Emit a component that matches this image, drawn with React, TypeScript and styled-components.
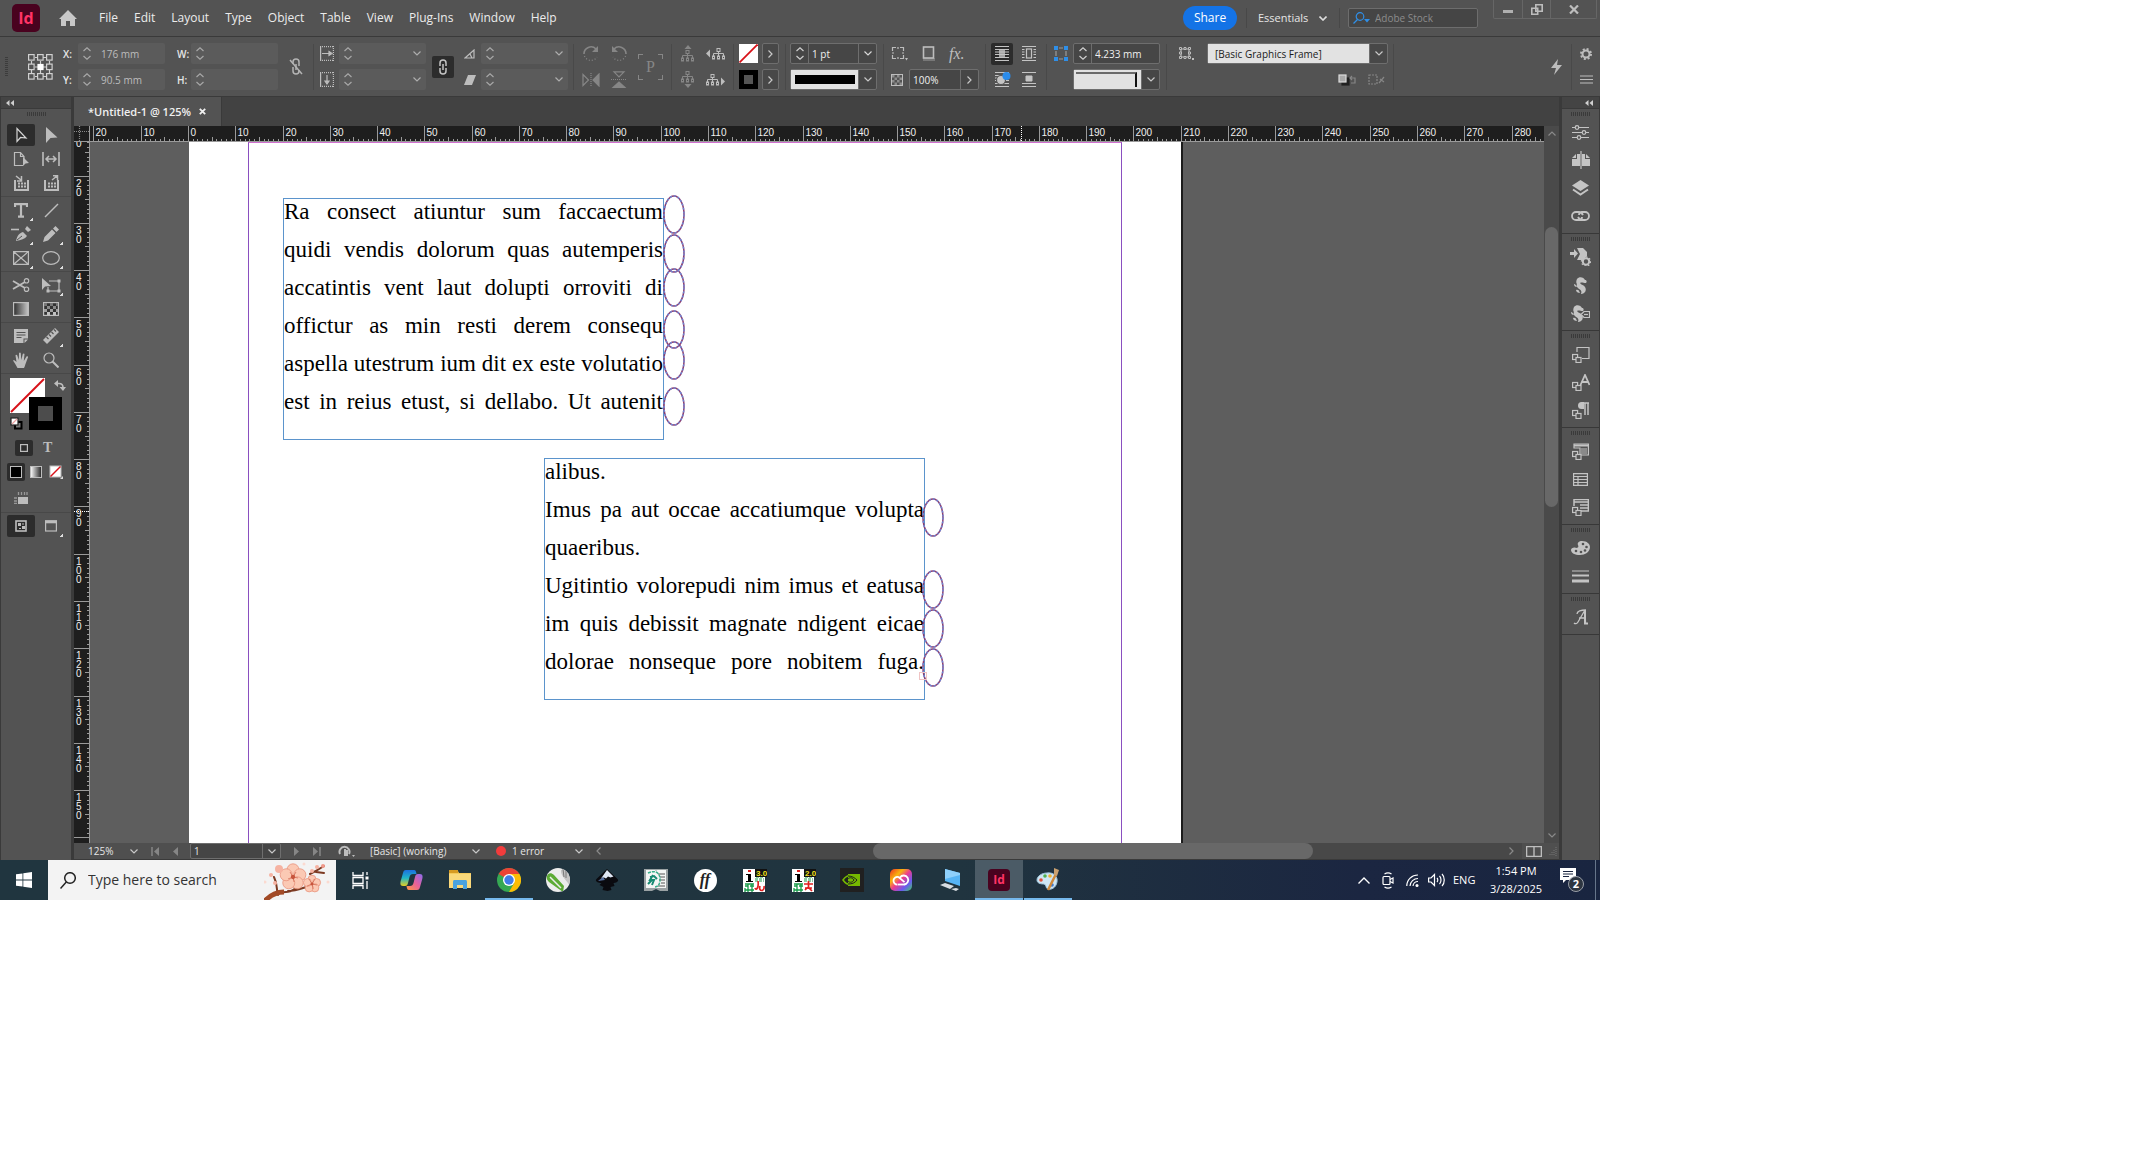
import React from "react";
import styled, { createGlobalStyle, css } from "styled-components";

const ui = '"Open Sans", "Noto Sans", sans-serif';
const c = {
  chrome: "#535353",
  dark: "#424242",
  line: "#3a3a3a",
  pressed: "#2c2c2c",
  icon: "#bdbdbd",
  dim: "#868686",
  text: "#e6e6e6",
  canvas: "#5e5e5e",
  ruler: "#1e1e1e",
};

const Global = createGlobalStyle`
  *, *::before, *::after { box-sizing: border-box; }
  body { margin: 0; background: #fff; font-family: ${ui}; }
  button, input, select { font: inherit; color: inherit; margin: 0; padding: 0; border: 0; background: none; border-radius: 0; }
  svg { display: block; flex: none; }
`;

const Desktop = styled.div`
  display: flex;
  flex-direction: column;
  width: 100%;
  max-width: 1600px;
  aspect-ratio: 16 / 9;
  overflow: hidden;
  background: ${c.chrome};
  color: ${c.text};
  font-size: 10px;
  line-height: 14px;
`;

/* ---------- shared icon wrapper ---------- */
type IcoProps = { w: number; h?: number; color?: string; children: React.ReactNode };
const Ico = ({ w, h = w, color = c.icon, children }: IcoProps) => (
  <svg width={w} height={h} viewBox={`0 0 ${w} ${h}`} fill="none" stroke={color} strokeWidth="1.2" aria-hidden="true">
    {children}
  </svg>
);
const Chevron = ({ color = "#c8c8c8" }: { color?: string }) => (
  <Ico w={8} h={5} color={color}><path d="M.5.5 4 4 7.5.5" /></Ico>
);
const ChevronRight = ({ color = "#c8c8c8" }: { color?: string }) => (
  <Ico w={5} h={8} color={color}><path d="M.5.5 4 4 .5 7.5" /></Ico>
);

/* ---------- menu bar ---------- */
const MenuBar = styled.header`
  display: flex;
  align-items: center;
  height: 37px;
  flex: none;
  padding-left: 12px;
  border-bottom: 1px solid ${c.line};
`;
const Logo = styled.span<{ $size: number }>`
  display: grid;
  place-items: center;
  width: ${(p) => p.$size}px;
  height: ${(p) => p.$size}px;
  border-radius: ${(p) => (p.$size > 24 ? 5 : 4)}px;
  background: #49021f;
  color: #ff3366;
  font-weight: 700;
  font-size: ${(p) => (p.$size > 24 ? 16 : 12)}px;
  line-height: 20px;
`;
const HomeButton = styled.button`
  margin: 0 22px 0 19px;
`;
const Menu = styled.nav`
  display: flex;
  gap: 16px;
  font-size: 12px;
  line-height: 16px;
  color: #ececec;
`;
const MenuTools = styled.div`
  display: flex;
  align-items: center;
  align-self: stretch;
  margin-left: auto;
`;
const ShareButton = styled.button`
  width: 54px;
  height: 24px;
  border-radius: 12px;
  background: #1473e6;
  color: #fff;
  font-size: 12px;
`;
const Rule = styled.i<{ $before: number; $after: number }>`
  flex: none;
  width: 1px;
  height: 20px;
  margin: 0 ${(p) => p.$after}px 0 ${(p) => p.$before}px;
  background: #484848;
`;
const Picker = styled.label<{ $w: number }>`
  display: flex;
  align-items: center;
  width: ${(p) => p.$w}px;
  select {
    appearance: none;
    flex: 1;
    min-width: 0;
    outline: 0;
  }
`;
const Workspace = styled(Picker)`
  font-size: 11px;
`;
const StockSearch = styled.label`
  display: flex;
  align-items: center;
  gap: 5px;
  width: 130px;
  height: 20px;
  padding-left: 4px;
  border: 1px solid #6d6d6d;
  border-radius: 2px;
  background: #454545;
  input { width: 96px; font-size: 10px; outline: 0; }
  input::placeholder { color: #8c8c8c; opacity: 1; }
`;
const WindowButtons = styled.div`
  display: flex;
  align-self: flex-start;
  height: 19px;
  margin: 0 3px 0 15px;
  border: 1px solid #666;
  border-top: 0;
  border-radius: 0 0 2px 2px;
  button { display: grid; place-items: center; width: 28px; }
  button + button { border-left: 1px solid #666; }
  button:last-child { width: 46px; }
`;

/* ---------- control bar ---------- */
const ControlBar = styled.section`
  display: flex;
  align-items: center;
  flex: none;
  height: 60px;
  border-bottom: 1px solid ${c.line};
`;
const Stack = styled.div<{ $gap: number; $w: number }>`
  flex: none;
  display: grid;
  grid-template-rows: 21px 21px;
  row-gap: 5px;
  align-items: center;
  width: ${(p) => p.$w}px;
  margin-left: ${(p) => p.$gap}px;
`;
const Whole = styled.div<{ $gap: number; $w: number }>`
  flex: none;
  width: ${(p) => p.$w}px;
  margin-left: ${(p) => p.$gap}px;
`;
const Divider = styled.i<{ $gap: number }>`
  flex: none;
  width: 1px;
  height: 46px;
  margin-left: ${(p) => p.$gap}px;
  background: #494949;
`;
const FieldLabel = styled.label`
  font-size: 10px;
  font-weight: 600;
`;
const FieldBox = styled.div<{ $on?: boolean }>`
  display: flex;
  height: 21px;
  border-radius: 2px;
  background: #5b5b5b;
  color: #bdbdbd;
  ${(p) => p.$on && css`
    background: #464646;
    color: #f0f0f0;
    border: 1px solid #6e6e6e;
  `}
  input {
    flex: 1;
    width: 0;
    min-width: 0;
    padding-left: ${(p) => (p.$on ? 3 : 5)}px;
    font-size: 10px;
    outline: 0;
  }
`;
const Cell = styled.span<{ $on?: boolean; $left?: boolean }>`
  display: grid;
  place-items: center;
  align-content: center;
  gap: 4px;
  width: 18px;
  flex: none;
  ${(p) => p.$on && (p.$left ? "border-right: 1px solid #6e6e6e;" : "border-left: 1px solid #6e6e6e;")}
`;
const Spin = ({ on }: { on?: boolean }) => (
  <Cell $on={on} $left>
    <Ico w={8} h={13} color={on ? "#d0d0d0" : "#a8a8a8"}><path d="M.5 4 4 .8 7.500 4M.5 9 4 12.200 7.500 9" /></Ico>
  </Cell>
);
type FieldProps = { name: string; value?: string; id?: string; spin?: boolean; drop?: boolean; right?: boolean; on?: boolean };
const Field = ({ name, value = "", id, spin = true, drop, right, on }: FieldProps) => (
  <FieldBox $on={on}>
    {spin && <Spin on={on} />}
    <input id={id} aria-label={id ? undefined : name} defaultValue={value} />
    {drop && <Cell $on={on}><Chevron color={on ? "#d8d8d8" : "#adadad"} /></Cell>}
    {right && <Cell $on={on}><ChevronRight /></Cell>}
  </FieldBox>
);
const SampleBox = styled.button`
  display: flex;
  width: 100%;
  height: 21px;
  border: 1px solid #6e6e6e;
  border-radius: 2px;
  background: #464646;
`;
const Sample = styled.span`
  flex: 1;
  align-self: stretch;
  background: #e2e2e2;
  padding: 5px 3px 5px 4px;
  i { display: block; height: 9px; background: #000; }
`;
const CornerSample = styled.span`
  flex: 1;
  align-self: stretch;
  background: #e2e2e2;
  padding: 2px 4px 2px 2px;
  i { display: block; height: 15px; border-top: 2px solid #6a6a6a; border-right: 2px solid #111; }
`;
const SampleArrow = styled(Cell)`
  align-self: stretch;
`;
const IconButton = styled.button<{ $on?: boolean; $w?: number; $h?: number }>`
  display: grid;
  place-items: center;
  justify-self: start;
  width: ${(p) => (p.$w ? `${p.$w}px` : "100%")};
  height: ${(p) => (p.$h ? `${p.$h}px` : "auto")};
  border-radius: 2px;
  ${(p) => p.$on && `background: ${c.pressed};`}
`;
const ArrowButton = styled.button`
  display: grid;
  place-items: center;
  width: 100%;
  height: 21px;
  border: 1px solid #6e6e6e;
  border-radius: 2px;
  background: #484848;
`;
const Line = styled.div<{ $gap: number; $end?: boolean }>`
  display: flex;
  align-items: center;
  gap: ${(p) => p.$gap}px;
  ${(p) => p.$end && "justify-content: flex-end; padding-right: 3px;"}
`;
const Opacity = styled.div`
  width: 70px;
`;
const StyleSelect = styled.label`
  display: flex;
  align-items: center;
  height: 21px;
  border: 1px solid #6e6e6e;
  border-radius: 2px;
  background: #484848;
  select {
    appearance: none;
    flex: 1;
    align-self: stretch;
    padding-left: 7px;
    background: #e2e2e2;
    color: #1a1a1a;
    outline: 0;
  }
`;
const Fx = styled.span`
  font: italic 16px/18px "Liberation Serif", serif;
  color: ${c.icon};
`;
const GripV = () => (
  <Ico w={3} h={20} color="#3c3c3c"><path d="M1.500 0v20" strokeWidth="3" strokeDasharray="1 1" /></Ico>
);

const RefPoint = () => (
  <Ico w={25} h={26} color="#d0d0d0">
    <path d="M7 3.500h3M15 3.500h3M7 13h3M15 13h3M7 22.500h3M15 22.500h3M3.500 7v3M3.500 16v3M12.500 7v3M12.500 16v3M21.500 7v3M21.500 16v3" />
    {[0, 9, 18].map((x) => [0, 9.5, 19].map((y) =>
      x === 9 && y === 9.5
        ? <rect key="mid" x="10" y="10.500" width="5" height="5" fill="#fff" stroke="#fff" />
        : <rect key={`${x}-${y}`} x={x + 0.6} y={y + 0.6} width="5.500" height="5.500" />
    ))}
  </Ico>
);
const Unlink = () => (
  <Ico w={14} h={18} color="#b4b4b4">
    <path d="M4 6V4a3 3 0 0 1 6 0v4M4 9v4a3 3 0 0 0 6 0v-1M7 6v6" strokeWidth="1.500" /><path d="M1 2l12 14" strokeWidth="1.500" />
  </Ico>
);
const ScaleIcon = ({ down }: { down?: boolean }) => (
  <Ico w={14} h={15}>
    {down ? <><path d="M0 14.400h14M0 .600h14" strokeDasharray="1 1" /><path d="M.6 0v15" /><path d="M13.400 0v15" strokeDasharray="1 1" /><path d="M7 3v7M5 9h4l-2 3z" fill={c.icon} /></>
      : <><path d="M.6 0v15" /><path d="M0 .6h14M0 14.400h14M13.400 0v15" strokeDasharray="1 1" /><path d="M2 7.500h7M9 5.500l3 2-3 2z" fill={c.icon} /></>}
  </Ico>
);
const Rotate = ({ flip }: { flip?: boolean }) => (
  <Ico w={18} h={17} color={c.dim}>
    <g transform={flip ? "translate(18 0) scale(-1 1)" : undefined}>
      <path d="M2 9a7 7 0 0 1 12-5" strokeWidth="1.600" /><path d="M16 1v6h-6z" fill={c.dim} stroke="none" />
      <path d="M2.500 11a7 7 0 0 0 12.500 1" strokeDasharray="1 2" />
    </g>
  </Ico>
);
const FlipH = () => (
  <Ico w={18} h={14} color={c.dim}><path d="M1 1.500v11L6.500 7z" /><path d="M17 1v12l-6-6z" fill={c.dim} /><path d="M9 0v14" strokeDasharray="1 1" /></Ico>
);
const FlipV = () => (
  <Ico w={18} h={17} color={c.dim}><path d="M4 .8h10L9 6z" /><path d="M3 16.500h12L9 11z" fill={c.dim} /><path d="M1 8.500h16" strokeDasharray="1 1" /></Ico>
);
const PBox = styled.span`
  display: grid;
  place-items: center;
  width: 25px;
  height: 26px;
  color: ${c.dim};
  font: 16px/20px "Liberation Serif", serif;
  background:
    linear-gradient(${c.dim} 0 0) 0 0/5px 1px, linear-gradient(${c.dim} 0 0) 0 0/1px 5px,
    linear-gradient(${c.dim} 0 0) 100% 0/5px 1px, linear-gradient(${c.dim} 0 0) 100% 0/1px 5px,
    linear-gradient(${c.dim} 0 0) 0 100%/5px 1px, linear-gradient(${c.dim} 0 0) 0 100%/1px 5px,
    linear-gradient(${c.dim} 0 0) 100% 100%/5px 1px, linear-gradient(${c.dim} 0 0) 100% 100%/1px 5px;
  background-repeat: no-repeat;
`;
const Tree = ({ dir }: { dir: "up" | "down" | "left" | "right" }) => {
  const side = dir === "left" || dir === "right";
  const col = side ? c.icon : c.dim;
  const tx = dir === "left" ? 6 : 0;
  const ty = dir === "up" ? 5 : 0;
  return (
    <Ico w={side ? 19 : 14} h={side ? 12 : 17} color={col}>
      <g transform={`translate(${tx} ${ty})`} strokeWidth="1">
        <rect x="5" y=".5" width="3" height="3" /><path d="M6.500 3.500V8M1.500 8V5.500h10V8" />
        <rect x=".5" y="8" width="2" height="3" /><rect x="5.500" y="8" width="2" height="3" /><rect x="10.500" y="8" width="2" height="3" />
      </g>
      {dir === "up" && <path d="M3.500 4 7 0l3.500 4z" fill={col} stroke="none" />}
      {dir === "down" && <path d="M3.500 13 7 17l3.500-4z" fill={col} stroke="none" />}
      {dir === "left" && <path d="M4 1.500 0 5.500l4 4z" fill={col} stroke="none" />}
      {dir === "right" && <path d="M15 3.500l4 4-4 4z" fill={col} stroke="none" />}
    </Ico>
  );
};
const NoneSwatch = () => (
  <svg width="19" height="19" viewBox="0 0 19 19"><rect width="19" height="19" fill="#fff" /><path d="M.5 18.500 18.500.5" stroke="#d81118" strokeWidth="1.800" /></svg>
);
const StrokeSwatch = () => (
  <svg width="19" height="19" viewBox="0 0 19 19"><rect width="19" height="19" fill="#000" /><rect x="5" y="5" width="9" height="9" fill="#555" /></svg>
);
const WrapIcon = ({ kind }: { kind: 0 | 1 | 2 | 3 }) => (
  <Ico w={18} h={15} color="#c4c4c4">
    <path strokeWidth="1" d="M2 .5h14M2 14.500h14" />
    {kind !== 3 && <path strokeWidth="1" d="M2 3.500h14M2 6h14M2 8.500h14M2 11.500h14" />}
    {kind === 0 && <path d="M6 3h6v9H6z" fill="#c4c4c4" stroke="none" opacity=".8" />}
    {kind === 1 && <rect x="5.500" y="2.500" width="7" height="10" fill={c.chrome} stroke={c.chrome} strokeWidth="2" />}
    {kind === 1 && <rect x="6.500" y="3" width="5" height="9" />}
    {kind === 2 && <><circle cx="8" cy="8" r="4.500" fill="#c4c4c4" stroke={c.chrome} /><circle cx="13.500" cy="4" r="4" fill="#2b8ceb" stroke="none" /></>}
    {kind === 3 && <path d="M6 4h6v5H6zM2 11.500h14" fill="#c4c4c4" strokeWidth="1" />}
  </Ico>
);
const Checker = ({ s }: { s: number }) => (
  <Ico w={s}>
    <rect x=".5" y=".5" width={s - 1} height={s - 1} strokeWidth="1" />
    {[0, 1, 2, 3].map((i) => [0, 1, 2, 3].map((j) => (i + j) % 2 ? null :
      <rect key={`${i}${j}`} x={1 + (i * (s - 2)) / 4} y={1 + (j * (s - 2)) / 4} width={(s - 2) / 4} height={(s - 2) / 4} fill="#8d8d8d" stroke="none" />))}
  </Ico>
);

/* ---------- tools ---------- */
const Body = styled.main`
  display: flex;
  flex: 1;
  min-height: 0;
`;
const PanelHead = styled.div`
  display: flex;
  align-items: center;
  flex: none;
  height: 12px;
  border-bottom: 1px solid ${c.line};
  background: #444;
`;
const Tools = styled.aside`
  flex: none;
  width: 74px;
  border: solid ${c.line};
  border-width: 0 3px 0 1px;
  ${PanelHead} { padding-left: 5px; }
`;
const Grip = styled.i`
  display: block;
  width: 19px;
  height: 4px;
  margin: 3px auto 6px;
  background: repeating-linear-gradient(90deg, #3a3a3a 0 1px, transparent 1px 2px);
`;
const ToolGroup = styled.div`
  display: grid;
  grid-template-columns: 30px 30px;
  grid-auto-rows: 24px;
  padding: 1px 0 1px 5px;
  border-bottom: 1px solid #484848;
`;
const Tool = styled.button<{ $on?: boolean; $more?: boolean }>`
  position: relative;
  display: grid;
  place-items: center;
  width: 28px;
  height: 22px;
  margin: 1px;
  border-radius: 2px;
  ${(p) => p.$on && `background: ${c.pressed};`}
  ${(p) => p.$more && css`
    &::after {
      content: "";
      position: absolute;
      right: 2px;
      bottom: 0;
      width: 3px;
      height: 3px;
      background: linear-gradient(135deg, transparent 45%, #ddd 45%);
    }
  `}
`;
const Colors = styled.div`
  position: relative;
  height: 62px;
`;
const FillProxy = styled.button`
  position: absolute;
  left: 9px;
  top: 4px;
`;
const StrokeProxy = styled.button`
  position: absolute;
  left: 28px;
  top: 23px;
  width: 33px;
  height: 33px;
  border: 9px solid #000;
  background: #4c4c4c;
`;
const SwapButton = styled.button`
  position: absolute;
  left: 53px;
  top: 6px;
`;
const DefaultsButton = styled.button`
  position: absolute;
  left: 9px;
  top: 43px;
`;
const ToolRow = styled.div<{ $h: number; $pad: number; $gap: number }>`
  display: flex;
  align-items: center;
  height: ${(p) => p.$h}px;
  padding-left: ${(p) => p.$pad}px;
  gap: ${(p) => p.$gap}px;
`;
const TypeMark = styled.span`
  font: 700 14px/18px "Liberation Serif", serif;
  color: ${c.icon};
`;
const ModeGroup = styled(ToolGroup)`
  border-top: 1px solid #484848;
  border-bottom: 0;
`;

const f = { fill: c.icon, stroke: "none" };
const toolIcons: { name: string; more?: boolean; on?: boolean; icon: React.ReactNode }[][] = [
  [
    { name: "Selection", on: true, icon: <Ico w={14} h={17} color="#d6d6d6"><path d="M3 1.500v13l3.500-4 5.500.5z" /></Ico> },
    { name: "Direct selection", icon: <Ico w={14} h={17}><path d="M2 0v16l4.500-5 7-.5z" {...f} /></Ico> },
    { name: "Page", icon: <Ico w={16} h={16}><path d="M10 14.500H1.500v-13h6l3.500 4V8M7.500 1.500v4H11" /><path d="M10 6v9l2.500-2.500 3.500-.5z" {...f} /></Ico> },
    { name: "Gap", icon: <Ico w={18} h={14}><path d="M1 0v14M17 0v14" strokeWidth="1.600" /><path d="M4 7h10M7 4 4 7l3 3M11 4l3 3-3 3" strokeWidth="1.500" /></Ico> },
    { name: "Content collector", icon: <Ico w={15} h={16}><path d="M1 5v10h13V5" strokeWidth="2" /><path d="M4 8.500h8M4 11.500h8" strokeWidth="2" strokeDasharray="2 1" /><path d="M2 1l5 4M7.500 1v5H3" strokeWidth="1.500" /></Ico> },
    { name: "Content placer", icon: <Ico w={15} h={16}><path d="M1 5v10h13V5" strokeWidth="2" /><path d="M4 8.500h8M4 11.500h8" strokeWidth="2" strokeDasharray="2 1" /><path d="M8 5l5-4M9 .800h4.500V5" strokeWidth="1.500" /></Ico> },
  ],
  [
    { name: "Type", more: true, icon: <Ico w={14} h={15}><path d="M1 4V1.200h12V4M7 1v12.500M4 13.700h6" strokeWidth="2.200" /></Ico> },
    { name: "Line", icon: <Ico w={15}><path d="M1 14 14 1" strokeWidth="1.500" /></Ico> },
    { name: "Pen", more: true, icon: <Ico w={20} h={16}><path d="M0 3.500h8" strokeWidth="1.600" /><path d="M5 15c1-5 3-8 7-9l4 4c-2 3-6 4-11 5z" {...f} /><path d="M14 3l2-3 4 4-3 2z" {...f} /><path d="M6 14l5-4" stroke={c.chrome} strokeWidth="1" /></Ico> },
    { name: "Pencil", more: true, icon: <Ico w={16}><path d="M0 16l1.500-5L9 3.500 12.500 7 5 14.500zM10 2.500 12.500 0 16 3.500 13.500 6z" {...f} /></Ico> },
    { name: "Rectangle frame", more: true, icon: <Ico w={16} h={14}><path d="M.6.6h14.800v12.800H.6zM1 1l14 12M15 1 1 13" /></Ico> },
    { name: "Ellipse", more: true, icon: <Ico w={18} h={14}><ellipse cx="9" cy="7" rx="8.300" ry="6.300" /></Ico> },
  ],
  [
    { name: "Scissors", icon: <Ico w={18} h={14}><circle cx="14.500" cy="2.800" r="2.200" /><circle cx="14.500" cy="11.200" r="2.200" /><path d="M1 3l12 7M1 11 13 4" strokeWidth="1.800" /></Ico> },
    { name: "Free transform", more: true, icon: <Ico w={20} h={15}><path d="M8 3h10v10H7V9" /><path d="M16.500 1.500h3v3h-3zM16.500 11.500h3v3h-3zM5.500 11.500h3v3h-3z" {...f} /><path d="M1 0v12l3-3.500L10 8z" {...f} /></Ico> },
    { name: "Gradient swatch", icon: <Ico w={16} h={14}><defs><linearGradient id="gs"><stop offset="0" stopColor="#2e2e2e" /><stop offset="1" stopColor="#c8c8c8" /></linearGradient></defs><rect x=".6" y=".6" width="14.800" height="12.800" fill="url(#gs)" /></Ico> },
    { name: "Gradient feather", icon: <Ico w={16} h={14}><rect x=".6" y=".6" width="14.800" height="12.800" fill="#333" />{[0, 1, 2, 3].map((j) => <path key={j} d={`M${j % 2 ? 4 : 1} ${2.5 + j * 3}h${j % 2 ? 11 : 14}`} strokeWidth="3" strokeDasharray="3 3" stroke={["#777", "#8a8a8a", "#a0a0a0", "#c0c0c0"][j]} />)}</Ico> },
  ],
  [
    { name: "Note", icon: <Ico w={14}><path d="M0 0h14v9.500H9.500V14H0zM10.500 10.500H14L10.500 14z" {...f} /><path d="M2.500 3.500h9M2.500 6h9M2.500 8.500h5" stroke={c.chrome} /></Ico> },
    { name: "Measure", more: true, icon: <Ico w={16}><path d="M0 12 12 0l4 4L4 16z" {...f} /><path d="M3.500 9l2 2M6 6.500l2 2M8.500 4l2 2M11 1.500l2 2" stroke={c.chrome} /></Ico> },
    { name: "Hand", icon: <Ico w={16}><path d="M4.500 16C3 13 1.500 11 0 8.500c.8-.8 2-.3 3.500 1.500L2.500 3.500c.2-1 1.400-1 1.800 0L5.800 8 6 1.200c.3-1 1.600-1 1.800 0L8.300 8l1.500-6c.5-1 1.700-.7 1.700.3L10.800 9l2.700-4.500c.8-.7 1.700-.1 1.500.8L12.500 12c-.6 2-1 3-1.500 4z" {...f} /></Ico> },
    { name: "Zoom", icon: <Ico w={16}><circle cx="6" cy="6" r="5" /><path d="M9.500 9.500 15.500 15.500" strokeWidth="2" /></Ico> },
  ],
];

/* ---------- document ---------- */
const Doc = styled.section`
  flex: 1;
  min-width: 0;
  display: flex;
  flex-direction: column;
`;
const TabStrip = styled.div`
  flex: none;
  display: flex;
  height: 29px;
  background: ${c.dark};
`;
const Tab = styled.div`
  display: flex;
  align-items: center;
  gap: 8px;
  width: 148px;
  padding-left: 14px;
  border-right: 1px solid ${c.line};
  background: ${c.chrome};
  color: #f0f0f0;
  font-size: 11px;
  font-weight: 600;
  white-space: nowrap;
`;
const View = styled.div`
  flex: 1;
  min-height: 0;
  display: grid;
  grid-template: 16px minmax(0, 1fr) / 16px minmax(0, 1fr) 15px;
`;
const RulerBox = styled.div`
  overflow: hidden;
  background: ${c.ruler};
  min-width: 0;
  min-height: 0;
  svg text { font: 10px "Liberation Sans", sans-serif; fill: #f0f0f0; stroke: none; }
`;
const Canvas = styled.div`
  position: relative;
  overflow: hidden;
  background: ${c.canvas};
`;
const Sheet = styled.div`
  position: absolute;
  left: 99px;
  top: 0;
  width: 994px;
  height: 100%;
  border: solid #1c1c1c;
  border-width: 0 2px 0 0;
  background: #fff;
`;
const Margins = styled.div`
  position: absolute;
  left: 59px;
  top: 0;
  width: 874px;
  height: 100%;
  border: solid #8a4fc0;
  border-width: 0 1px;
  border-top: 1px solid #d070d0;
`;
const TextFrame = styled.article<{ $x: number; $y: number }>`
  position: absolute;
  left: ${(p) => p.$x}px;
  top: ${(p) => p.$y}px;
  width: 381px;
  height: 242px;
  border: 1px solid #5b94cc;
  color: #000;
  font: 23px/38px "Liberation Serif", serif;
  p { margin: 0; white-space: nowrap; }
  p:first-child { margin-top: -6px; }
`;
const Justified = styled.p`
  text-align: justify;
  text-align-last: justify;
`;
const Mark = styled.svg<{ $x: number; $y: number }>`
  position: absolute;
  left: ${(p) => p.$x}px;
  top: ${(p) => p.$y}px;
`;
const EndMark = styled.i`
  position: absolute;
  left: 829px;
  top: 530px;
  width: 8px;
  height: 8px;
  border: 1px solid #f0c4c4;
`;
const VScroll = styled.div`
  grid-row: 1 / 3;
  grid-column: 3;
  display: flex;
  flex-direction: column;
  align-items: center;
  padding: 5px 0;
  background: #4a4a4a;
`;
const VThumb = styled.i`
  width: 13px;
  height: 280px;
  margin: 91px 0 auto;
  border-radius: 7px;
  background: #686868;
`;
const Status = styled.footer`
  flex: none;
  display: flex;
  align-items: center;
  height: 17px;
  border-bottom: 1px solid ${c.line};
  background: #4f4f4f;
`;
const StatusItem = styled.div<{ $gap: number }>`
  flex: none;
  display: flex;
  margin-left: ${(p) => p.$gap}px;
`;
const PageBox = styled.div`
  display: flex;
  width: 91px;
  height: 16px;
  margin-left: 12px;
  border: 1px solid #6e6e6e;
  border-radius: 2px;
  background: #454545;
  input { width: 71px; padding-left: 3px; font-size: 10px; outline: 0; }
`;
const Dot = styled.i`
  flex: none;
  width: 10px;
  height: 10px;
  margin: 0 6px 0 16px;
  border-radius: 50%;
  background: #f23c3c;
`;
const HScroll = styled.div`
  flex: 1;
  display: flex;
  align-items: center;
  height: 16px;
  margin-left: 7px;
  padding: 0 8px 0 6px;
  background: #484848;
`;
const HThumb = styled.i`
  flex: none;
  width: 440px;
  height: 16px;
  margin: 0 auto 0 272px;
  border-radius: 8px;
  background: #686868;
`;
const StatusEnd = styled.div`
  display: flex;
  align-items: center;
  gap: 6px;
  padding: 0 2px 0 4px;
`;

/* ---------- dock ---------- */
const Dock = styled.aside`
  flex: none;
  width: 41px;
  border: solid ${c.line};
  border-width: 0 1px 0 3px;
  ${PanelHead} { justify-content: flex-end; padding-right: 6px; }
`;
const DockGroup = styled.div`
  padding: 3px 0;
  border-bottom: 1px solid #383838;
  ${Grip} { margin: 0 auto 2px; }
`;
const DockButton = styled.button`
  display: grid;
  place-items: center;
  width: 100%;
  height: 28px;
`;

const d = "#c4c4c4";
const df = { fill: d, stroke: "none" };
const Pair = () => <><rect x=".6" y="8.500" width="5" height="5" fill={c.chrome} /><rect x="4" y="11.500" width="5" height="5" fill={c.chrome} /></>;
const Knot = () => <><path d="M3 2c2-3 7-2 8 1 2 0 2 2 1 3-3 0-4-1-6 0 1 2 4 2 5 4 2 3 0 7-4 7 1-3 0-4-2-5-2-2-3-3-2-5C2 6 2 4 3 2z" {...df} /><path d="M0 7c1 0 2 1 3 3-2 0-3-1-3-3zM2 13c2-1 3 0 4 3-2 0-4-1-4-3z" {...df} /></>;
const dockIcons: { name: string; icon: React.ReactNode }[][] = [
  [
    { name: "Properties", icon: <Ico w={17} h={15} color={d}><path d="M0 2.500h17M0 7.500h17M0 12.500h17" /><circle cx="5" cy="2.500" r="1.800" fill={c.chrome} /><circle cx="12" cy="7.500" r="1.800" fill={c.chrome} /><circle cx="7" cy="12.500" r="1.800" fill={c.chrome} /></Ico> },
    { name: "Pages", icon: <Ico w={18} h={18} color={d}><path d="M0 7l4-4v4zM0 8h5V3h3v12H0zM18 7l-4-4v4zM18 8h-5V3h-3v12h8z" {...df} /><path d="M9 0v18" /></Ico> },
    { name: "Layers", icon: <Ico w={17} h={16} color={d}><path d="M8.500 0 17 5.500 8.500 11 0 5.500z" {...df} /><path d="M1 9.500l7.500 5 7.500-5" strokeWidth="2" /></Ico> },
    { name: "Links", icon: <Ico w={19} h={10} color={d}><path d="M11 6c0 2-1 3-3 3H5a4 4 0 0 1 0-8h3c2 0 3 1 4 3M8 4c0-2 1-3 3-3h3a4 4 0 0 1 0 8h-3c-2 0-3-1-4-3" strokeWidth="1.800" /></Ico> },
  ],
  [
    { name: "Package", icon: <Ico w={21} h={18} color={d}><path d="M7 0h6l4 4v4l-4 4H7l3-6zM0 4h4V1l4 4.500L4 10V7H0z" {...df} /><circle cx="16" cy="13.500" r="3.200" strokeWidth="2" /><circle cx="16" cy="13.500" r="4.600" strokeDasharray="1.500 2" /></Ico> },
    { name: "Threads", icon: <Ico w={13} h={17} color={d}><Knot /></Ico> },
    { name: "Thread tags", icon: <Ico w={19} h={17} color={d}><Knot /><path d="M10 9.500l3-3h5.500v6H13z" fill={c.chrome} /><path d="M13 9.500h4" /></Ico> },
  ],
  [
    { name: "Object styles", icon: <Ico w={18} h={17} color={d}><path d="M5 6V1.500h12v11h-7" /><Pair /></Ico> },
    { name: "Character styles", icon: <Ico w={18} h={17} color={d}><path d="M8.500 11 13 1l4.500 10M10 8h6" strokeWidth="1.800" /><Pair /></Ico> },
    { name: "Paragraph styles", icon: <Ico w={18} h={17} color={d}><path d="M13 1v12M16 1v12M17 1h-6" strokeWidth="1.500" /><path d="M12 0v7H9.500a3.500 3.500 0 0 1 0-7z" {...df} /><Pair /></Ico> },
  ],
  [
    { name: "Cell styles", icon: <Ico w={17} h={17} color={d}><path d="M2 1h14.400v11H8V5H2z" /><path d="M2 2.500h14" strokeWidth="2" /><path d="M9 5h6v6H9z" fill="#8a8a8a" stroke="none" /><Pair /></Ico> },
    { name: "Table", icon: <Ico w={15} h={13} color={d}><path d="M.6.6h13.800v11.800H.6zM1 3.500h13M5 3v9M1 6.500h13M1 9.500h13" /></Ico> },
    { name: "Table styles", icon: <Ico w={17} h={17} color={d}><path d="M2 7V.600h14.400V12H9M2 3h14M8 6h8M8 9h8" strokeWidth="1.500" /><Pair /></Ico> },
  ],
  [
    { name: "Color", icon: <Ico w={19} h={14} color={d}><path d="M11 0c5 0 8 3 8 6 0 5-5 8-10 8-5 0-9-2-9-5 0-2 3-3 5-2 2 0 3-1 2-3S8 0 11 0z" {...df} />{[[12, 3], [15.5, 6], [14, 9.5], [10, 11], [5, 10]].map(([x, y]) => <circle key={x} cx={x} cy={y} r="1.300" fill={c.chrome} stroke="none" />)}</Ico> },
    { name: "Stroke", icon: <Ico w={17} h={13} color={d}><path d="M0 1h17" strokeWidth="1" /><path d="M0 5.500h17" strokeWidth="2" /><path d="M0 11h17" strokeWidth="3" /></Ico> },
  ],
  [{ name: "Glyphs", icon: <Ico w={16} h={16} color={d}><path d="M12 1 5 13c-1 2-3 2-4 1M12 1l.5 13M4 5c0-3 4-4 9-4M6 9h7" strokeWidth="1.300" /><path d="M12 1v13.500h3" strokeWidth="2" /></Ico> }],
];

/* ---------- ruler ticks ---------- */
const MM = 4.727;
const HRuler = () => {
  const out: React.ReactNode[] = [];
  for (let m = -20; m <= 288; m++) {
    const x = Math.round(99 + m * MM) - 0.5;
    const major = m % 10 === 0;
    out.push(<path key={m} d={`M${x} ${major ? 0 : m % 5 === 0 ? 11 : 13}V16`} />);
    if (major) out.push(<text key={`t${m}`} x={x + 2} y="10">{Math.abs(m)}</text>);
  }
  return <svg width="1454" height="16" stroke="#9a9a9a">{out}<path d="M0 15.500H1454" /><path d="M931.500 0V16" stroke="#fff" strokeDasharray="1 1" /></svg>;
};
const VRuler = () => {
  const out: React.ReactNode[] = [];
  for (let m = 13; m <= 160; m++) {
    const y = Math.round(-60 + m * MM) - 0.5;
    const major = m % 10 === 0;
    out.push(<path key={m} d={`M${major ? 0 : m % 5 === 0 ? 11 : 13} ${y}H16`} />);
    if (major && m < 160) String(m).split("").forEach((ch, i) => out.push(<text key={`${m}-${i}`} x="2" y={y + 10 + i * 9}>{ch}</text>));
  }
  return <svg width="16" height="701" stroke="#9a9a9a"><text x="2" y="5">0</text>{out}<path d="M15.500 0V701" /><path d="M0 369.500H16" stroke="#fff" strokeDasharray="1 1" /></svg>;
};

/* ---------- taskbar ---------- */
const Taskbar = styled.footer`
  flex: none;
  display: flex;
  align-items: stretch;
  height: 40px;
  background: linear-gradient(90deg, #20353f 0%, #20343f 60%, #1b2641 85%, #192540 100%);
`;
const Start = styled.button`
  display: grid;
  place-items: center;
  width: 48px;
`;
const Search = styled.label`
  display: flex;
  align-items: center;
  width: 288px;
  padding-left: 12px;
  background: #f3f3f3;
  input { width: 142px; margin-left: 12px; font-size: 14px; line-height: 20px; color: #222; outline: 0; }
  input::placeholder { color: #333; opacity: 1; }
`;
const Blossom = styled.svg`
  align-self: flex-end;
  margin-left: auto;
`;
const Apps = styled.div`
  display: flex;
  gap: 1px;
  button:first-child { margin-right: 2px; }
`;
const AppButton = styled.button<{ $open?: boolean; $active?: boolean }>`
  display: grid;
  place-items: center;
  width: 48px;
  ${(p) => p.$active && "background: #4b5b66;"}
  ${(p) => p.$open && "box-shadow: inset 0 -2px #76b9ed;"}
`;
const Tray = styled.div`
  display: flex;
  align-items: center;
  margin-left: auto;
  padding-right: 4px;
  color: #fff;
  font-size: 11px;
  button { display: grid; place-items: center; width: 24px; }
`;
const Lang = styled.span`
  width: 31px;
  margin-left: 5px;
`;
const Clock = styled.time`
  width: 64px;
  text-align: center;
  font-size: 11px;
  line-height: 18px;
`;
const Notice = styled.span`
  position: relative;
  margin: 0 11px 0 12px;
  width: 24px;
  height: 24px;
  b {
    position: absolute;
    left: 8px;
    top: 8px;
    width: 16px;
    height: 16px;
    border: 1px solid #9a9fa8;
    border-radius: 50%;
    background: #2d3540;
    font-size: 11px;
    line-height: 14px;
    text-align: center;
  }
`;
const Edge = styled.i`
  width: 1px;
  height: 40px;
  background: #66758a;
`;
const FfMark = styled.span`
  display: grid;
  place-items: center;
  width: 23px;
  height: 23px;
  border-radius: 50%;
  background: #fff;
  color: #222;
  font: italic 700 16px/20px "Liberation Serif", serif;
`;

const Flower = ({ x, y, r }: { x: number; y: number; r: number }) => (
  <g transform={`translate(${x} ${y})`}>
    {[0, 72, 144, 216, 288].map((a) => <circle key={a} r={r * 0.5} cx={Math.sin((a * Math.PI) / 180) * r * 0.6} cy={-Math.cos((a * Math.PI) / 180) * r * 0.6} fill="#fbc9b4" stroke="#e8937c" strokeWidth=".8" />)}
    <circle r={r * 0.18} fill="#c8553d" /><path d="M0 0-3-5M0 0l3-5M0 0l5 1M0 0l-5 2M0 0l1 5" stroke="#c8553d" strokeWidth=".6" />
  </g>
);
const IPage = ({ tag, foot }: { tag: string; foot: string }) => (
  <svg width="25" height="25" viewBox="0 0 25 25">
    <rect x="1" y="1" width="22" height="23" fill="#fff" />
    <path d="M6 2h3v2H6z" fill="#e02020" /><path d="M4 6h5v7h2v1H4v-1h2V7H4z" fill="#000" />
    <path d="M3 16h9M3 18h3M8 18h4M3 20v4M6 16v8M10 16v8M3 22h9" stroke="#159a48" strokeWidth="1.300" />
    <path d="M13 11h9M13 13h9M14 9h8" stroke="#159a48" strokeDasharray="3 1" />
    <rect x="13" y="1" width="12" height="8" fill="#111" />
    <text x="14" y="8" fontSize="8" fontWeight="700" fill="#f2e21c" fontFamily="Liberation Sans, sans-serif">{tag}</text>
    <path d={foot} stroke="#e02020" strokeWidth="1.700" fill="none" />
  </svg>
);
const apps: { name: string; open?: boolean; active?: boolean; icon: React.ReactNode }[] = [
  { name: "Task view", icon: <Ico w={17} h={17} color="#fff"><path d="M1 0v3.500h10V0M1 17v-3.500h10V17M1 5.500h10v6H1zM15 0v3M15 9v8" strokeWidth="1.300" /><path d="M13.500 4.500h3v3h-3z" fill="#fff" stroke="none" /></Ico> },
  { name: "Copilot", icon: <svg width="23" height="22" viewBox="0 0 23 22"><defs><linearGradient id="cp1" x1="0" y1="0" x2="0" y2="1"><stop offset="0" stopColor="#1c6fe0" /><stop offset=".5" stopColor="#1fb5c8" /><stop offset="1" stopColor="#e8d020" /></linearGradient><linearGradient id="cp2" x1="1" y1="0" x2="0" y2="1"><stop offset="0" stopColor="#8b6cf0" /><stop offset=".5" stopColor="#e8609a" /><stop offset="1" stopColor="#ff9a40" /></linearGradient></defs><path d="M6 1h8c2 0 2 2 2.500 4H13c-2 0-3 1-3.500 3L8 14c-.5 2-1 3-3 3H3c-3 0-3-3-2-6L3 4c.500-2 1-3 3-3z" fill="url(#cp1)" /><path d="M17 21H9c-2 0-2-2-2.500-4H10c2 0 3-1 3.500-3L15 8c.5-2 1-3 3-3h2c3 0 3 3 2 6l-2 7c-.5 2-1 3-3 3z" fill="url(#cp2)" /></svg> },
  { name: "File Explorer", icon: <svg width="22" height="20" viewBox="0 0 22 20"><path d="M0 1h9l1 2h12v15H0z" fill="#f5cb5c" /><path d="M0 0h9v3H0z" fill="#d79b22" /><path d="M0 4h22v14H0z" fill="#fad97a" /><path d="M4 19v-7c0-2 1-2 2-2h10c1 0 2 0 2 2v7h-4v-4H8v4z" fill="#4aa3df" /></svg> },
  { name: "Chrome", open: true, icon: <svg width="24" height="24" viewBox="0 0 24 24"><circle cx="12" cy="12" r="12" fill="#35a853" /><path d="M12 12 1.600 6A12 12 0 0 1 22.400 6z" fill="#ea4335" /><path d="M12 6h10.400A12 12 0 0 1 12 24l5.200-9z" fill="#fbbc05" /><circle cx="12" cy="12" r="6" fill="#fff" /><circle cx="12" cy="12" r="4.700" fill="#3f7de8" /></svg> },
  { name: "CorelDRAW", icon: <svg width="24" height="24" viewBox="0 0 24 24"><defs><clipPath id="disc"><circle cx="12" cy="12" r="12" /></clipPath></defs><g clipPath="url(#disc)"><rect width="24" height="24" fill="#ececec" /><path d="M15 2c-1 5 6 11 9 16V0z" fill="#c4c4c4" /><path d="M17 1l1 8M20 1l0 9" stroke="#777" /><path d="M1 8c1-3 4-4 7-1l10 11-1 6L3 14C1 12 0 10 1 8z" fill="#5cab35" /><path d="M4 9l11 11" stroke="#ececec" strokeWidth="1.500" /></g></svg> },
  { name: "Inkscape", icon: <svg width="24" height="24" viewBox="0 0 24 24"><path d="M12 1 22.500 11c2 2-1 4-4 4l1 3-4 1 1 3-4 1-5-1 1-3-4-2 2-2c-4 0-7-2-5-4z" fill="#0a0a0f" /><path d="M12 2l6.500 6.500-3 1-2.500-1-2 2-2-1-3 1z" fill="#dfe7f4" /><path d="M3 13l5-4 2 3z" fill="#5870a0" /></svg> },
  { name: "Reader", icon: <svg width="24" height="24" viewBox="0 0 24 24"><path d="M0 1h24v22h-8l-4-2-4 2H0z" fill="#9aa2a4" /><path d="M2 2h9l1 1 1-1h9v18H2z" fill="#f4f6f5" /><path d="M14 6h7M16 9h5M15 12h6M17 15h4M14 18h7" stroke="#555" /><path d="M9 7l-3 5h4l-2 5M6 9l4-1 3 3M8 12l-4 4" stroke="#168a72" strokeWidth="2" fill="none" /><path d="M4 5c6-3 12-1 12 6s-3 8-6 8" stroke="#38b08c" strokeWidth="1.500" strokeDasharray="3 1" fill="none" /></svg> },
  { name: "Font tool", icon: <FfMark>ff</FfMark> },
  { name: "InPage 3", icon: <IPage tag="3.0" foot="M16 13c1 7-2 10-3 7M18 18c-2 6 5 6 4 0" /> },
  { name: "InPage 2", icon: <IPage tag="2.0" foot="M13 16h9M17.500 13v8M14 22l3-3 4 4M14 20h7" /> },
  { name: "NVIDIA", icon: <svg width="24" height="24" viewBox="0 0 24 24"><rect width="24" height="24" fill="#202020" /><path d="M8 6h12v12H8z" fill="#76b900" /><path d="M3 12c4-6 11-6 14 0-3 6-10 6-14 0z" stroke="#76b900" fill="none" strokeWidth="1.500" /><path d="M8 8c4 0 7 2 9 4-2 3-5 4-9 4M7 12c2-3 5-3 7 0-2 3-5 3-7 0z" stroke="#202020" fill="none" /></svg> },
  { name: "Creative Cloud", icon: <svg width="22" height="22" viewBox="0 0 22 22"><defs><linearGradient id="cc" x2="1" y2="1"><stop offset="0" stopColor="#f03020" /><stop offset=".3" stopColor="#f7b50c" /><stop offset=".5" stopColor="#ee3b8f" /><stop offset=".75" stopColor="#6a5af0" /><stop offset="1" stopColor="#40d060" /></linearGradient></defs><rect width="22" height="22" rx="5" fill="url(#cc)" /><path d="M7.500 15.500a3.800 3.800 0 1 1 1-7.400l6 5M14 15.500a4.500 4.500 0 1 0-4-7" stroke="#fff" strokeWidth="1.800" fill="none" /><path d="M8 15.500h6.500" stroke="#fff" strokeWidth="1.800" /></svg> },
  { name: "Remote desktop", icon: <svg width="24" height="22" viewBox="0 0 24 22"><path d="M7 0l15 4v13L7 12z" fill="#56b4f5" /><path d="M7 0l15 4v2L7 10z" fill="#8fd0fb" /><path d="M2 16l5-2 9 3-4 3zM13 20l5-1 3 1-3 2z" fill="#d8dde2" /></svg> },
  { name: "InDesign", open: true, active: true, icon: <Logo $size={22}>Id</Logo> },
  { name: "Paint", open: true, icon: <svg width="24" height="24" viewBox="0 0 24 24"><path d="M11 5c7-1 11 4 10 9-1 6-6 8-9 7-3-1-1-4-4-5-4 0-7-1-7-4 0-4 5-7 10-7z" fill="#cfe6f4" stroke="#9cc3dc" /><circle cx="5" cy="12" r="1.800" fill="#e0503a" /><circle cx="9" cy="8" r="1.800" fill="#50b050" /><circle cx="14" cy="8" r="1.800" fill="#f0b030" /><circle cx="16" cy="17" r="1.800" fill="#3c78d0" /><path d="M12 22 20 6" stroke="#d08a3c" strokeWidth="2.500" /><path d="M18 0l5 2-2 6-3-1z" fill="#c9a070" /></svg> },
];

const marks: [number, number][] = [
  [573, 53], [573, 92], [573, 126], [573, 168], [573, 199], [573, 245],
  [832, 356], [832, 428], [832, 467], [832, 506],
];
const frameA = [
  "Ra consect atiuntur sum faccaectum",
  "quidi vendis dolorum quas autemperis",
  "accatintis vent laut dolupti orroviti di",
  "offictur as min resti derem consequ",
  "aspella utestrum ium dit ex este volutatio",
  "est in reius etust, si dellabo. Ut autenit",
];
const DoubleArrow = () => <Ico w={8} h={6} color="#d0d0d0"><path d="M3.500 0v6L0 3zM8 0v6L4.500 3z" fill="#d0d0d0" stroke="none" /></Ico>;

export default function App() {
  return (
    <Desktop>
      <Global />
      <MenuBar>
        <Logo $size={28}>Id</Logo>
        <HomeButton aria-label="Home">
          <Ico w={18} h={16}><path d="M9 0l9 9h-2v7h-5v-5H7v5H2V9H0z" fill="#c8c8c8" stroke="none" /></Ico>
        </HomeButton>
        <Menu>
          {["File", "Edit", "Layout", "Type", "Object", "Table", "View", "Plug-Ins", "Window", "Help"].map((m) => <button key={m}>{m}</button>)}
        </Menu>
        <MenuTools>
          <ShareButton>Share</ShareButton>
          <Rule $before={9} $after={11} />
          <Workspace $w={69}>
            <select aria-label="Workspace"><option>Essentials</option></select>
            <Ico w={8} h={5} color="#ddd"><path d="M.5.5 4 4 7.500.5" strokeWidth="1.600" /></Ico>
          </Workspace>
          <Rule $before={12} $after={8} />
          <StockSearch>
            <Ico w={17} h={12} color="#2f8fe8"><circle cx="7" cy="4.500" r="3.800" /><path d="M4.500 7.500.5 11.500" /><path d="M11 7h6l-3 3.500z" fill="#2f8fe8" stroke="none" /></Ico>
            <input placeholder="Adobe Stock" aria-label="Adobe Stock" />
          </StockSearch>
          <WindowButtons>
            <button aria-label="Minimize"><Ico w={10} h={12}><path d="M0 8.500h10" strokeWidth="3" stroke="#b0b0b0" /></Ico></button>
            <button aria-label="Restore"><Ico w={12} h={11}><path d="M4.800.8h6.400v6.400H4.800zM.8 4.300h5.900v5.900H.8z" fill={c.chrome} strokeWidth="1.600" /></Ico></button>
            <button aria-label="Close"><Ico w={10} h={9}><path d="M1 .500l8 8M9 .500l-8 8" strokeWidth="2.200" /></Ico></button>
          </WindowButtons>
        </MenuTools>
      </MenuBar>

      <ControlBar>
        <Whole $gap={5} $w={3}><GripV /></Whole>
        <Whole $gap={20} $w={25}><RefPoint /></Whole>
        <Stack $gap={10} $w={14}><FieldLabel htmlFor="fx">X:</FieldLabel><FieldLabel htmlFor="fy">Y:</FieldLabel></Stack>
        <Stack $gap={1} $w={87}><Field id="fx" name="X" value="176 mm" /><Field id="fy" name="Y" value="90.5 mm" /></Stack>
        <Stack $gap={12} $w={14}><FieldLabel htmlFor="fw">W:</FieldLabel><FieldLabel htmlFor="fh">H:</FieldLabel></Stack>
        <Stack $gap={0} $w={87}><Field id="fw" name="W" /><Field id="fh" name="H" /></Stack>
        <Whole $gap={11} $w={14}><Unlink /></Whole>
        <Divider $gap={10} />
        <Stack $gap={6} $w={14}><ScaleIcon /><ScaleIcon down /></Stack>
        <Stack $gap={5} $w={87}><Field name="Scale X" drop /><Field name="Scale Y" drop /></Stack>
        <Whole $gap={6} $w={22}>
          <IconButton $on $h={22} aria-label="Constrain scale"><Ico w={8} h={16} color="#c4c4c4"><path d="M1 7V4a3 3 0 0 1 6 0v3M1 9v3a3 3 0 0 0 6 0V9M4 5v6" strokeWidth="1.500" /></Ico></IconButton>
        </Whole>
        <Stack $gap={10} $w={12}>
          <Ico w={12} h={10}><path d="M1 9 10 1v8zM6 5l2 4" /></Ico>
          <Ico w={12} h={10}><path d="M4 0h8L8 10H0z" fill={c.icon} stroke="none" /></Ico>
        </Stack>
        <Stack $gap={5} $w={87}><Field name="Rotation" drop /><Field name="Shear" drop /></Stack>
        <Divider $gap={5} />
        <Stack $gap={8} $w={18}><Rotate /><FlipH /></Stack>
        <Stack $gap={10} $w={18}><Rotate flip /><FlipV /></Stack>
        <Whole $gap={10} $w={25}><PBox>P</PBox></Whole>
        <Divider $gap={8} />
        <Stack $gap={9} $w={14}><Tree dir="up" /><Tree dir="down" /></Stack>
        <Stack $gap={11} $w={19}><Tree dir="left" /><Tree dir="right" /></Stack>
        <Divider $gap={8} />
        <Stack $gap={5} $w={19}><NoneSwatch /><StrokeSwatch /></Stack>
        <Stack $gap={4} $w={17}>
          <ArrowButton aria-label="Fill options"><ChevronRight /></ArrowButton>
          <ArrowButton aria-label="Stroke options"><ChevronRight /></ArrowButton>
        </Stack>
        <Divider $gap={6} />
        <Stack $gap={4} $w={87}>
          <Field name="Stroke weight" value="1 pt" drop on />
          <SampleBox aria-label="Stroke type"><Sample><i /></Sample><SampleArrow $on><Chevron /></SampleArrow></SampleBox>
        </Stack>
        <Divider $gap={6} />
        <Stack $gap={7} $w={88}>
          <Line $gap={14}>
            <Ico w={17} h={15}><path d="M1.500 5V1.500H5M9 1.500h3.500V5M12.500 9v3.500H9M5 12.500H1.500V9M7 1v2M7 11v2M1 7h2M11 7h2" /><path d="M14 12h3l-1.500 2.500z" fill={c.icon} stroke="none" /></Ico>
            <Ico w={13} h={15}><path d="M1 12h12v3H1z" fill="#777" stroke="none" /><rect x="1.500" y="1" width="10" height="11" fill="#5a5a5a" strokeWidth="1.600" /></Ico>
            <Fx>fx.</Fx>
          </Line>
          <Line $gap={6}>
            <Checker s={12} />
            <Opacity><Field name="Opacity" value="100%" spin={false} right on /></Opacity>
          </Line>
        </Stack>
        <Divider $gap={6} />
        <Stack $gap={5} $w={22}>
          <IconButton $on $h={22} aria-label="No text wrap"><WrapIcon kind={0} /></IconButton>
          <IconButton aria-label="Wrap around object shape"><WrapIcon kind={2} /></IconButton>
        </Stack>
        <Stack $gap={7} $w={18}>
          <IconButton aria-label="Wrap around bounding box"><WrapIcon kind={1} /></IconButton>
          <IconButton aria-label="Jump object"><WrapIcon kind={3} /></IconButton>
        </Stack>
        <Divider $gap={8} />
        <Stack $gap={7} $w={14}>
          <Ico w={14} h={15}><path d="M5 2h4M5 13h4M2 5v5M12 5v5" stroke="#9a9a9a" /><path d="M0 0h4v4H0zM10 0h4v4h-4zM0 11h4v4H0zM10 11h4v4h-4z" fill="#2f8fe8" stroke="none" /></Ico>
        </Stack>
        <Stack $gap={5} $w={87}>
          <Field name="Corner size" value="4.233 mm" on />
          <SampleBox aria-label="Corner shape"><CornerSample><i /></CornerSample><SampleArrow $on><Chevron /></SampleArrow></SampleBox>
        </Stack>
        <Divider $gap={6} />
        <Stack $gap={12} $w={15}>
          <Ico w={15} h={13}><path d="M2 2h8v8H2z" /><path d="M.500.500h2v2h-2zM5 .500h2v2H5zM9.500.500h2v2h-2zM.500 5h2v2h-2zM9.500 5h2v2h-2zM.500 9.500h2v2h-2zM5 9.500h2v2H5zM9.500 9.500h2v2h-2z" strokeWidth="1" fill={c.chrome} /><path d="M13 11h2v2h-2z" fill={c.icon} stroke="none" /></Ico>
        </Stack>
        <Stack $gap={13} $w={181}>
          <StyleSelect>
            <select aria-label="Object style"><option>[Basic Graphics Frame]</option></select>
            <SampleArrow $on><Chevron /></SampleArrow>
          </StyleSelect>
          <Line $gap={10} $end>
            <Ico w={20} h={12} color={c.dim}><rect x="4" y="4" width="7" height="7" fill="#222" stroke="#222" /><rect x="1" y="1" width="7" height="7" fill="#aaa" stroke="#ddd" /><path d="M12 4h5v5h-4M14 2l-2 2 2 2" /></Ico>
            <Ico w={17} h={11} color={c.dim}><rect x="1" y="1" width="8" height="9" strokeDasharray="2 1" /><path d="M11 9l5-6M12 5l4 3" /></Ico>
          </Line>
        </Stack>
        <Divider $gap={5} />
        <MenuTools>
          <Ico w={11} h={16}><path d="M7 0 0 9h5l-2 7 8-10H6z" fill={c.icon} stroke="none" /></Ico>
          <Divider $gap={9} />
          <Stack $gap={8} $w={20}>
            <Ico w={12} h={12}><circle cx="6" cy="6" r="3.500" strokeWidth="2" /><circle cx="6" cy="6" r="5" strokeWidth="2" strokeDasharray="2 1.930" /></Ico>
            <Ico w={13} h={9}><path d="M0 1h13M0 4.500h13M0 8h13" /></Ico>
          </Stack>
        </MenuTools>
      </ControlBar>

      <Body>
        <Tools>
          <PanelHead><DoubleArrow /></PanelHead>
          <Grip />
          {toolIcons.map((g, i) => (
            <ToolGroup key={i}>
              {g.map((t) => <Tool key={t.name} aria-label={t.name} $on={t.on} $more={t.more}>{t.icon}</Tool>)}
            </ToolGroup>
          ))}
          <Colors>
            <FillProxy aria-label="Fill"><svg width="35" height="35"><rect width="35" height="35" fill="#fff" /><path d="M1 34 34 1" stroke="#d81118" strokeWidth="2" /></svg></FillProxy>
            <StrokeProxy aria-label="Stroke" />
            <SwapButton aria-label="Swap"><Ico w={12} h={11}><path d="M3 3.500h2c3 0 4 2 4 4" strokeWidth="1.600" /><path d="M4 0v7L0 3.500zM5.500 7H12l-3 4z" fill={c.icon} stroke="none" /></Ico></SwapButton>
            <DefaultsButton aria-label="Default colors"><Ico w={13}><rect x="5" y="5" width="6.500" height="6.500" fill="#777" stroke="#000" strokeWidth="2" /><rect x="1" y="1" width="7" height="7" fill="#fff" stroke="#222" /><path d="M2 7l5-5" stroke="#e8a0a0" /></Ico></DefaultsButton>
          </Colors>
          <ToolRow $h={24} $pad={14} $gap={10}>
            <IconButton $on $w={18} $h={16} aria-label="Format container"><Ico w={8}><rect x=".6" y=".6" width="6.800" height="6.800" /></Ico></IconButton>
            <TypeMark>T</TypeMark>
          </ToolRow>
          <ToolRow $h={24} $pad={6} $gap={5}>
            <IconButton $on $w={18} $h={18} aria-label="Apply color"><Ico w={12}><rect x=".5" y=".5" width="11" height="11" fill="#000" strokeWidth="1" /></Ico></IconButton>
            <IconButton $w={12} $h={12} aria-label="Apply gradient"><Ico w={12}><defs><linearGradient id="ag"><stop offset="0" stopColor="#fff" /><stop offset="1" stopColor="#222" /></linearGradient></defs><rect x=".5" y=".5" width="11" height="11" fill="url(#ag)" strokeWidth="1" /></Ico></IconButton>
            <IconButton $w={18} $h={18} aria-label="Apply none"><Ico w={14}><rect x="1" y="1" width="11" height="11" fill="#fff" strokeWidth="1" /><path d="M1.500 11.500l10-10" stroke="#d81118" strokeWidth="1.500" /><path d="M14 11v3h-3z" fill="#ddd" stroke="none" /></Ico></IconButton>
          </ToolRow>
          <ToolRow $h={28} $pad={13} $gap={0}>
            <Ico w={14} h={12}><path d="M4 5h10v7H4z" fill={c.icon} stroke="none" /><path d="M4.500 0v3M7.500 0v3M10.500 0v3M13 0v3M0 6h3M0 9h3M0 11.500h3" strokeWidth="1.300" stroke="#999" /></Ico>
          </ToolRow>
          <ModeGroup>
            <Tool $on aria-label="Normal view"><Ico w={12}><rect x="1" y="1" width="10" height="10" strokeWidth="1.600" /><path d="M3 3h3v3H3zM7 6h3v3H7z" fill={c.icon} stroke="none" /><path d="M4 8.500h2M7 4h2" /></Ico></Tool>
            <Tool $more aria-label="Screen mode"><Ico w={12}><rect x=".6" y="1" width="10.800" height="10" /><path d="M0 1.800h12" strokeWidth="3" /></Ico></Tool>
          </ModeGroup>
        </Tools>

        <Doc>
          <TabStrip>
            <Tab>
              <span>*Untitled-1 @ 125%</span>
              <button aria-label="Close tab"><Ico w={7} color="#f0f0f0"><path d="M.8.8l5.400 5.400M6.200.8.8 6.200" strokeWidth="1.800" /></Ico></button>
            </Tab>
          </TabStrip>
          <View>
            <RulerBox><Ico w={16} color="#8a8a8a"><path d="M0 5.500h16M5.500 0v16" strokeDasharray="1 1" /><path d="M15.500 0v16M0 15.500h16" stroke="#9a9a9a" strokeWidth="1" /></Ico></RulerBox>
            <RulerBox><HRuler /></RulerBox>
            <VScroll>
              <Ico w={8} h={5} color="#8a8a8a"><path d="M.5 4.500 4 1l3.500 3.500" /></Ico>
              <VThumb />
              <Chevron color="#8a8a8a" />
            </VScroll>
            <RulerBox><VRuler /></RulerBox>
            <Canvas>
              <Sheet><Margins /></Sheet>
              <TextFrame $x={193} $y={56}>
                {frameA.map((t) => <Justified key={t}>{t}</Justified>)}
              </TextFrame>
              <TextFrame $x={454} $y={316}>
                <p>alibus.</p>
                <Justified>Imus pa aut occae accatiumque volupta</Justified>
                <p>quaeribus.</p>
                <Justified>Ugitintio volorepudi nim imus et eatusa</Justified>
                <Justified>im quis debissit magnate ndigent eicae</Justified>
                <Justified>dolorae nonseque pore nobitem fuga.</Justified>
              </TextFrame>
              {marks.map(([x, y]) => (
                <Mark key={`${x}-${y}`} $x={x} $y={y} width="22" height="39" fill="none" strokeWidth="1.500">
                  <ellipse cx="11" cy="19.500" rx="10" ry="18.500" stroke="#8c3f70" />
                  <ellipse cx="11" cy="19.500" rx="10" ry="18.500" stroke="#6f86d6" strokeDasharray="2 2" />
                </Mark>
              ))}
              <EndMark />
            </Canvas>
          </View>
          <Status>
            <StatusItem $gap={14}>
              <Picker $w={50}><select aria-label="Zoom level"><option>125%</option></select><Chevron /></Picker>
            </StatusItem>
            <StatusItem $gap={13}><Ico w={8} h={9}><path d="M1 0v9" stroke={c.dim} strokeWidth="1.500" /><path d="M8 0v9L3 4.500z" fill={c.dim} stroke="none" /></Ico></StatusItem>
            <StatusItem $gap={14}><Ico w={5} h={9}><path d="M5 0v9L0 4.500z" fill={c.dim} stroke="none" /></Ico></StatusItem>
            <PageBox><input aria-label="Page" defaultValue="1" /><Cell $on><Chevron /></Cell></PageBox>
            <StatusItem $gap={13}><Ico w={5} h={9}><path d="M0 0v9l5-4.500z" fill={c.dim} stroke="none" /></Ico></StatusItem>
            <StatusItem $gap={14}><Ico w={8} h={9}><path d="M7 0v9" stroke={c.dim} strokeWidth="1.500" /><path d="M0 0v9l5-4.500z" fill={c.dim} stroke="none" /></Ico></StatusItem>
            <StatusItem $gap={17}><Ico w={17} h={12}><path d="M2 9A5 5 0 1 1 11 9M7 4v7M9 5v6" strokeWidth="2" /><path d="M14 10h3l-1.500 2z" fill={c.icon} stroke="none" /></Ico></StatusItem>
            <StatusItem $gap={15}>
              <Picker $w={110}><select aria-label="Preflight profile"><option>[Basic] (working)</option></select><Chevron /></Picker>
            </StatusItem>
            <Dot />
            <Picker $w={71}><select aria-label="Errors"><option>1 error</option></select><Chevron /></Picker>
            <HScroll>
              <Ico w={5} h={8} color="#8a8a8a"><path d="M4.500.5 1 4l3.500 3.500" /></Ico>
              <HThumb />
              <ChevronRight color="#8a8a8a" />
            </HScroll>
            <StatusEnd>
              <Ico w={16} h={11}><path d="M.6.6h14.800v9.800H.6zM8 0v11" strokeWidth="1.400" /></Ico>
              <Ico w={9} h={9} color="#777"><path d="M8 0v9M6 3v6M4 5v4M2 7v2" strokeDasharray="1 1" strokeWidth="1" /></Ico>
            </StatusEnd>
          </Status>
        </Doc>

        <Dock>
          <PanelHead><DoubleArrow /></PanelHead>
          {dockIcons.map((g, i) => (
            <DockGroup key={i}>
              <Grip />
              {g.map((b) => <DockButton key={b.name} aria-label={b.name}>{b.icon}</DockButton>)}
            </DockGroup>
          ))}
        </Dock>
      </Body>

      <Taskbar>
        <Start aria-label="Start"><svg width="16" height="16" viewBox="0 0 16 16"><path d="M0 2.300 6.500 1.400v6.200H0zM7.300 1.300 16 0v7.600H7.300zM0 8.400h6.500v6.200L0 13.700zM7.300 8.400H16V16l-8.700-1.300z" fill="#fff" /></svg></Start>
        <Search>
          <Ico w={16} h={17} color="#222"><circle cx="10" cy="6" r="5.300" strokeWidth="1.500" /><path d="M6.300 10 .5 16.500" strokeWidth="1.500" /></Ico>
          <input placeholder="Type here to search" aria-label="Type here to search" />
          <Blossom width="72" height="38" viewBox="0 0 72 38" fill="none">
            <path d="M0 38c6-5 14-8 22-8 6 0 9-4 14-6M14 33c-2-6 0-10-4-18M24 29c8 0 12-2 18-4M46 12c4-2 8-4 14-8M52 10l8 1" stroke="#7c3a22" strokeWidth="2" strokeLinecap="round" />
            <path d="M0 40c6-7 12-10 20-10" stroke="#a24a26" strokeWidth="5" />
            <Flower x={29} y={15} r={12} /><Flower x={48} y={22} r={8} />
            <circle cx="15" cy="7" r="4" fill="#f6b3a2" /><circle cx="7" cy="13" r="2" fill="#f6b3a2" /><circle cx="48" cy="9" r="2" fill="#f6b3a2" /><circle cx="53" cy="5" r="2" fill="#f6b3a2" /><circle cx="59" cy="4" r="2" fill="#f09a8c" /><circle cx="11" cy="21" r="2" fill="#f6b3a2" />
            <circle cx="1" cy="20" r="1.500" fill="#fbdad0" /><circle cx="64" cy="20" r="1.500" fill="#fbdad0" /><circle cx="40" cy="2" r="1.500" fill="#fbdad0" />
          </Blossom>
        </Search>
        <Apps>
          {apps.map((a) => <AppButton key={a.name} aria-label={a.name} $open={a.open} $active={a.active}>{a.icon}</AppButton>)}
        </Apps>
        <Tray>
          <button aria-label="Show hidden icons"><Ico w={12} h={7} color="#fff"><path d="M.5 6.500 6 1l5.500 5.500" strokeWidth="1.400" /></Ico></button>
          <button aria-label="Meet now"><Ico w={12} h={17} color="#fff"><rect x="1" y="4.500" width="7" height="8" rx="1" /><path d="M8 7.500l3-1.500v5L8 9.500M2.500 2c2-1.300 5-1.300 7 0M2.500 15c2 1.300 5 1.300 7 0" /></Ico></button>
          <button aria-label="Network"><Ico w={13} h={13} color="#fff"><path d="M.8 12A11 11 0 0 1 12 1M4 12a8 8 0 0 1 8-7.500M7 12a5 5 0 0 1 5-4.500" /><circle cx="11" cy="11.500" r="1.500" fill="#fff" stroke="none" /></Ico></button>
          <button aria-label="Volume"><Ico w={17} h={14} color="#fff"><path d="M.6 5v4H3l3.500 3.500v-11L3 5zM9 5c1 1 1 3 0 4M11.500 3c2 2 2 6 0 8M14 1c3 3 3 9 0 12" /></Ico></button>
          <Lang>ENG</Lang>
          <Clock>1:54 PM<br />3/28/2025</Clock>
          <Notice>
            <svg width="16" height="16" viewBox="0 0 16 16"><path d="M0 0h16v12H6l-3 3v-3H0z" fill="#fff" /><path d="M3 3.500h10M3 6h10M3 8.500h6" stroke="#1b2641" /></svg>
            <b>2</b>
          </Notice>
          <Edge />
        </Tray>
      </Taskbar>
    </Desktop>
  );
}
